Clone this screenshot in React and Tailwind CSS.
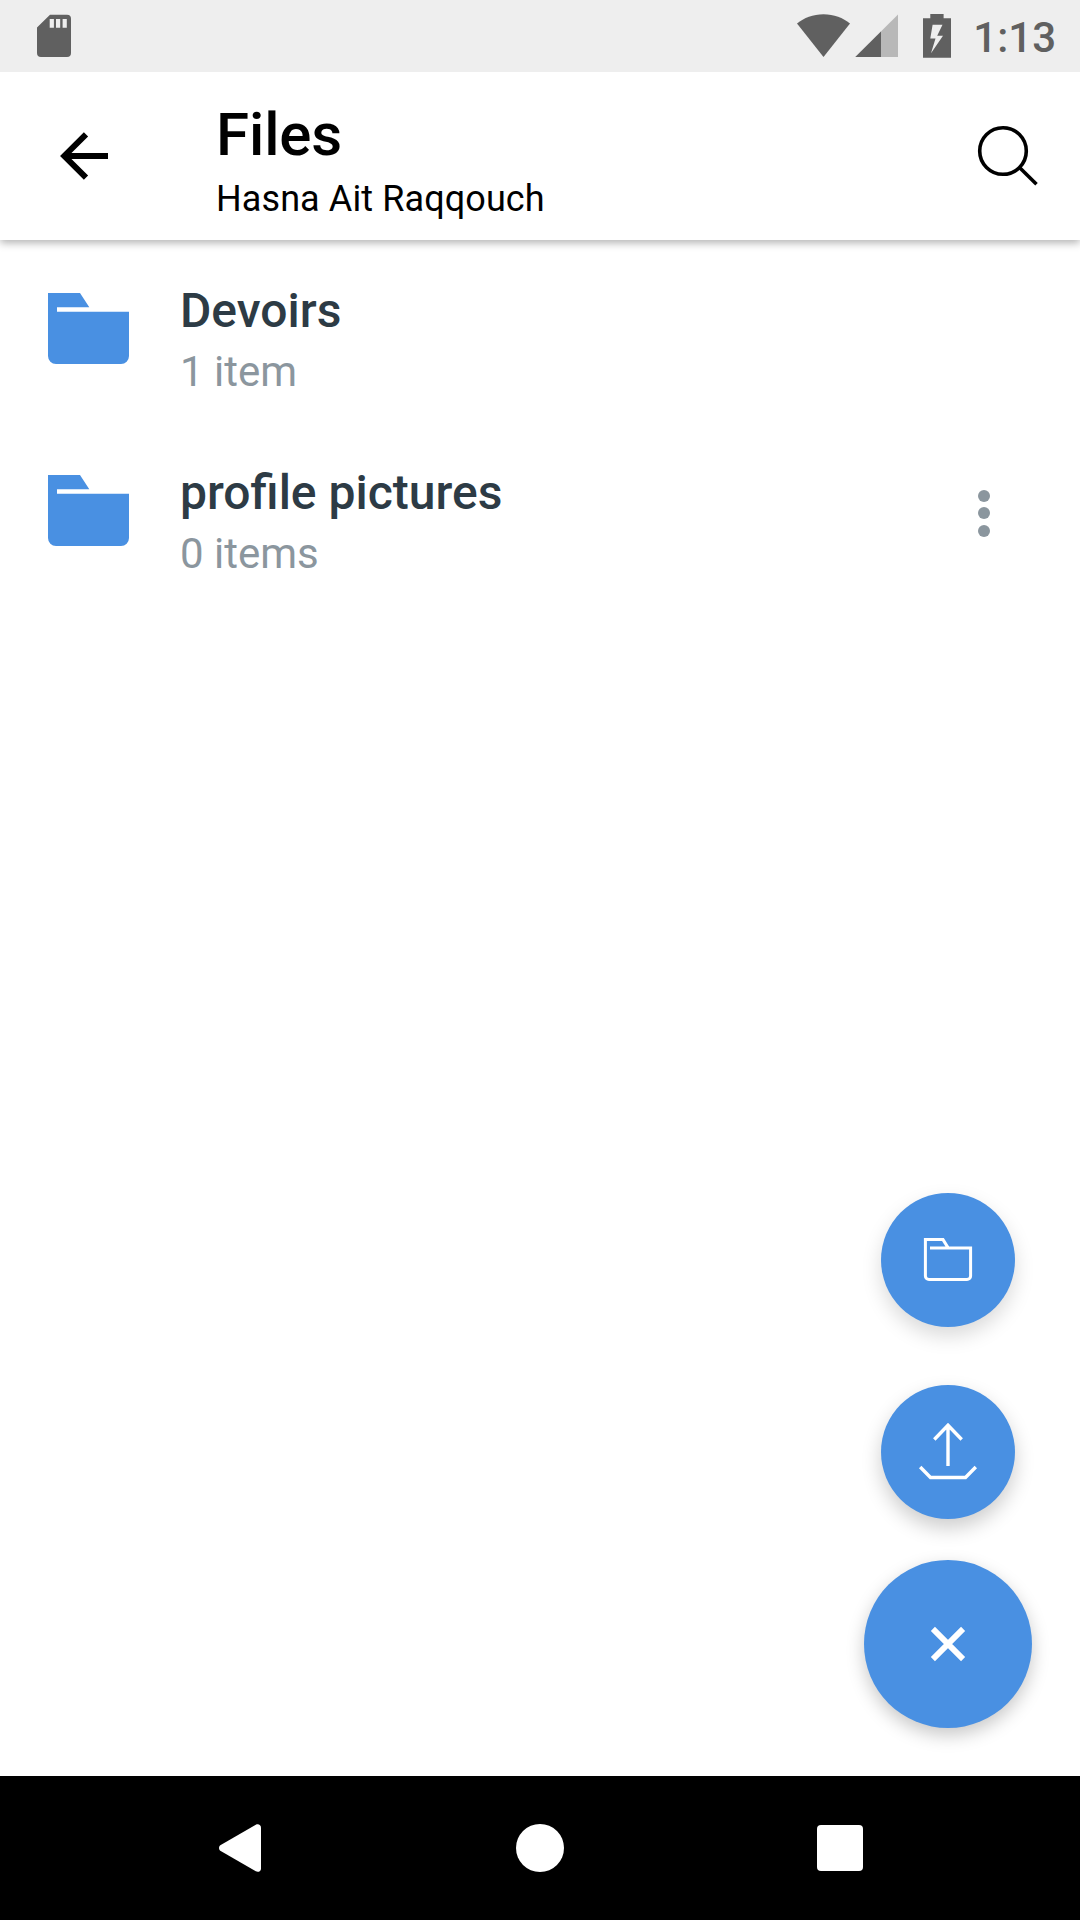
import React from 'react';

const folders = [
  { id: 1, name: 'Devoirs', count: '1 item', hasMenu: false },
  { id: 2, name: 'profile pictures', count: '0 items', hasMenu: true },
];

const StatusBar = () => (
  <div className="relative z-20 h-[72px] bg-[#eeeeee] flex items-center text-[#606060]">
    {/* SD card */}
    <svg className="ml-[37px]" width="34" height="72" viewBox="37 0 34 72" fill="currentColor">
      <path
        fillRule="evenodd"
        d="M50 14.7H67a4 4 0 0 1 4 4V53a4 4 0 0 1-4 4H41a4 4 0 0 1-4-4V27.5ZM49.7 19v8.7h4.2V19ZM56 19v8.7h4.2V19ZM62.6 19v8.7h4.2V19Z"
      />
    </svg>
    <div className="ml-auto mr-[24px] flex items-center">
      {/* wifi */}
      <svg width="54" height="72" viewBox="797 0 54 72" fill="currentColor">
        <path d="M823.5 57 797 23.5C804 18 813 14.3 823.5 14.3S843 18 850 23.5Z" />
      </svg>
      {/* signal */}
      <svg className="ml-[4px]" width="43" height="72" viewBox="855 0 43 72" fill="currentColor">
        <path d="M855.3 57 898 14.4V57Z" fillOpacity="0.38" />
        <path d="M855.3 57 881 31.4V57Z" />
      </svg>
      {/* battery */}
      <svg className="ml-[25px]" width="28" height="72" viewBox="923 0 28 72" fill="currentColor">
        <path
          fillRule="evenodd"
          d="M930.3 14H943.6V18.3H951V57.7H923V18.3H930.3ZM932.6 24.7 930.3 38.4H935.5L931 53.2 943 35.8H937.2L942.5 24.7Z"
        />
      </svg>
      <span className="ml-[22px] mt-[3px] text-[42px] leading-[50px] font-medium">1:13</span>
    </div>
  </div>
);

const Header = () => (
  <div className="relative z-10 h-[168px] bg-white flex text-black shadow-[0_3px_8px_rgba(0,0,0,0.3)]">
    <svg className="ml-[60px] mt-[60px]" width="48" height="48" viewBox="60 132 48 48" fill="none" stroke="currentColor" strokeWidth="6">
      <path d="M108 156H64M86 134.3 64.3 156 86 177.7" />
    </svg>
    <div className="ml-[108px] mt-[28px]">
      <h1 className="text-[60px] leading-[70px] font-medium tracking-[-0.1px]">Files</h1>
      <p className="mt-[8px] text-[36px] leading-[42px] tracking-[0.1px]">Hasna Ait Raqqouch</p>
    </div>
    <svg className="ml-auto mr-[42px] mt-[53px]" width="61" height="61" viewBox="977 125 61 61" fill="none" stroke="currentColor" strokeWidth="3.6">
      <circle cx="1003" cy="151" r="23.3" />
      <path d="M1019.5 167.5 1036.5 184.3" />
    </svg>
  </div>
);

const FolderRow = ({ folder }) => (
  <div className="h-[182px] flex">
    <svg className="ml-[48px] mt-[53px]" width="81" height="71" viewBox="0 0 81 71" fill="#4990e2">
      <path d="M0 0H32L41.3 14.2H9V18.8H81V63a8 8 0 0 1-8 8H8a8 8 0 0 1-8-8Z" />
    </svg>
    <div className="ml-[51px] mt-[43px]">
      <h2 className="text-[48px] leading-[56px] font-medium text-[#2d3b45]">{folder.name}</h2>
      <p className="mt-[8px] text-[42px] leading-[50px] text-[#8b969e]">{folder.count}</p>
    </div>
    {folder.hasMenu && (
      <div className="ml-auto mr-[90px] flex flex-col items-center justify-center gap-[5.5px]">
        <span className="w-[12px] h-[12px] rounded-full bg-[#8b969e]" />
        <span className="w-[12px] h-[12px] rounded-full bg-[#8b969e]" />
        <span className="w-[12px] h-[12px] rounded-full bg-[#8b969e]" />
      </div>
    )}
  </div>
);

const FloatingActions = () => (
  <div className="absolute right-[48px] bottom-[48px] flex flex-col items-center text-white">
    {/* new folder */}
    <button className="w-[134px] h-[134px] rounded-full bg-[#4990e2] flex items-center justify-center shadow-[0_9px_20px_rgba(0,0,0,0.15)]">
      <svg width="134" height="134" viewBox="881 1193 134 134" fill="none" stroke="currentColor" strokeWidth="3">
        <path d="M930 1248H970.6V1276a3.6 3.6 0 0 1-3.6 3.6H929a3.6 3.6 0 0 1-3.6-3.6V1239.6H943L948 1247.6" />
      </svg>
    </button>
    {/* upload */}
    <button className="mt-[58px] w-[134px] h-[134px] rounded-full bg-[#4990e2] flex items-center justify-center shadow-[0_9px_20px_rgba(0,0,0,0.2)]">
      <svg width="134" height="134" viewBox="881 1385 134 134" fill="none" stroke="currentColor" strokeWidth="3.4">
        <path d="M948 1466V1425M934.3 1439.5 948 1425.3 961.7 1439.5M920.2 1467 930.5 1477.5H965.5L975.8 1467" />
      </svg>
    </button>
    {/* close */}
    <button className="mt-[41px] w-[168px] h-[168px] rounded-full bg-[#4990e2] flex items-center justify-center shadow-[0_7px_18px_rgba(0,0,0,0.22)]">
      <svg width="36" height="36" viewBox="930 1626 36 36" fill="none" stroke="currentColor" strokeWidth="5.8">
        <path d="M932.9 1628.9 963.1 1659.1M963.1 1628.9 932.9 1659.1" />
      </svg>
    </button>
  </div>
);

const NavigationBar = () => (
  <div className="h-[144px] bg-black flex items-center text-white">
    <svg className="ml-[219px]" width="42" height="48" viewBox="0 0 42 48" fill="currentColor">
      <path d="M1.3 21.2 36.8.7C39.2-.6 42 .8 42 3.6V44.4C42 47.2 39.2 48.6 36.8 47.3L1.3 26.8C-.4 25.6-.4 22.4 1.3 21.2Z" />
    </svg>
    <span className="ml-[255px] w-[48px] h-[48px] rounded-full bg-white" />
    <span className="ml-[253px] w-[46px] h-[46px] rounded-[4px] bg-white" />
  </div>
);

const App = () => (
  <div className="w-[1080px] h-[1920px] flex flex-col bg-white overflow-hidden font-['Roboto',sans-serif]">
    <StatusBar />
    <Header />
    <div className="relative flex-1">
      {folders.map((folder) => (
        <FolderRow key={folder.id} folder={folder} />
      ))}
      <FloatingActions />
    </div>
    <NavigationBar />
  </div>
);

export default App;
